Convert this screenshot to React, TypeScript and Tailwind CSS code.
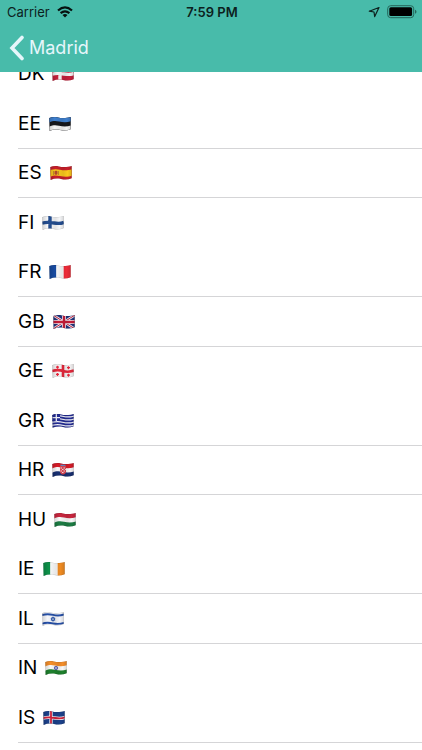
import type { ReactNode } from "react";

const WAVE = "M.3 2C3 .8 6 .8 9 1.400S17 2.400 21.700 .9V13.300C18 14.900 14.500 14.800 11 14S4 13.400 .6 14.900Z";

type Country = { code: string; name: string; divider: boolean; art: ReactNode };

function columns(colors: string[]) {
  const w = 22 / colors.length;
  return colors.map((c, i) => <rect key={i} x={i * w} width={w + 0.1} height="16" fill={c} />);
}

function nordic(field: string, outer: string, inner?: string) {
  return (
    <>
      <rect width="22" height="16" fill={field} />
      <path d="M8 0V16M0 8.200C4 7 8 7.300 12 8S19 8.600 22 7.400" fill="none" stroke={outer} strokeWidth="3.400" />
      {inner && <path d="M8 0V16M0 8.200C4 7 8 7.300 12 8S19 8.600 22 7.400" fill="none" stroke={inner} strokeWidth="1.800" />}
    </>
  );
}

function threeBands(top: string, middle: string, bottom: string) {
  return (
    <>
      <rect width="22" height="16" fill={middle} />
      <path d="M0 0H22V5.200C18 6.700 14 6.500 10 5.600S4 5 0 6.400Z" fill={top} />
      <path d="M0 16H22V9.400C18 11 14 10.700 10 9.800S4 9.200 0 10.700Z" fill={bottom} />
    </>
  );
}

const countries: Country[] = [
  { code: "DK", name: "Denmark", divider: false, art: nordic("#c4203b", "#f4f4f4") },
  { code: "EE", name: "Estonia", divider: true, art: threeBands("#3f7fcd", "#16171c", "#f4f4f4") },
  {
    code: "ES", name: "Spain", divider: true,
    art: (
      <>
        <rect width="22" height="16" fill="#c71f2b" />
        <path d="M0 5C4 3.800 7 4 10 4.700S18 5.700 22 4.200V10.800C18 12.300 14 12 10 11.100S4 10.400 0 11.800Z" fill="#fac81c" />
        <rect x="4.500" y="5.800" width="3" height="4" rx="1" fill="#b04a28" />
        <path d="M3.500 6V10M8.500 6V10" stroke="#a8742c" strokeWidth=".7" />
      </>
    ),
  },
  { code: "FI", name: "Finland", divider: false, art: nordic("#f5f6f8", "#234d90") },
  { code: "FR", name: "France", divider: true, art: columns(["#174a9f", "#fafafa", "#ed2b38"]) },
  {
    code: "GB", name: "United Kingdom", divider: true,
    art: (
      <>
        <rect width="22" height="16" fill="#20337d" />
        <path d="M0 1L22 15M0 15L22 1" stroke="#eceaf2" strokeWidth="2.600" />
        <path d="M0 1L22 15M0 15L22 1" stroke="#c5243f" strokeWidth="1" />
        <path d="M11 0V16M0 8H22" stroke="#f0edf4" strokeWidth="4" />
        <path d="M11 0V16M0 8H22" stroke="#c51c38" strokeWidth="2.400" />
      </>
    ),
  },
  {
    code: "GE", name: "Georgia", divider: false,
    art: (
      <>
        <rect width="22" height="16" fill="#f6f3f4" />
        <path d="M11 0V16M0 8C4 6.900 8 7 11 8S18 8.900 22 7.600" fill="none" stroke="#e5283c" strokeWidth="2.600" />
        <path d="M4 4.200H7M5.500 2.700V5.700M15 4.700H18M16.500 3.200V6.200M4 11.400H7M5.500 9.900V12.900M15 12.200H18M16.500 10.700V13.700" stroke="#e5283c" strokeWidth="1.300" />
      </>
    ),
  },
  {
    code: "GR", name: "Greece", divider: true,
    art: (
      <>
        <rect width="22" height="16" fill="#f0f1f8" />
        {[1.8, 4.8, 7.8, 10.8, 13.8].map((y) => (
          <path key={y} d={`M0 ${y}C4 ${y - 1} 8 ${y - 0.8} 11 ${y}S18 ${y + 1} 22 ${y - 0.3}`} fill="none" stroke="#232c94" strokeWidth="1.800" />
        ))}
        <rect width="8" height="8" fill="#232c94" />
        <path d="M4.300 0V8M0 4.600H8" stroke="#f0f1f8" strokeWidth="1.300" />
      </>
    ),
  },
  {
    code: "HR", name: "Croatia", divider: true,
    art: (
      <>
        {threeBands("#d51b28", "#f7f5f6", "#182f70")}
        <path d="M8 4H14V9.500Q14 12 11 12.500Q8 12 8 9.500Z" fill="#dc4652" />
        <path d="M8.500 6H10M11.500 6H13M10 7.500H11.500M13 7.500H14M8.500 9H10M11.500 9H13M10 10.500H11.500" stroke="#fbd9dc" />
        <path d="M8.500 3.300H13.500" stroke="#668bc5" strokeWidth="1.200" />
      </>
    ),
  },
  { code: "HU", name: "Hungary", divider: false, art: threeBands("#c9263e", "#f8f8f8", "#1c7c43") },
  { code: "IE", name: "Ireland", divider: true, art: columns(["#0d9049", "#fafafa", "#ef8b22"]) },
  {
    code: "IL", name: "Israel", divider: true,
    art: (
      <>
        <rect width="22" height="16" fill="#f5f6fa" />
        <path d="M0 4.200C4 2.800 7 3 11 3.900S18 4.900 22 3.400M0 12.700C4 11.300 7 11.600 11 12.400S18 13.300 22 11.800" fill="none" stroke="#2650a8" strokeWidth="1.900" />
        <path d="M11 5.800L13 9.200H9ZM11 10.400L9 7H13Z" fill="none" stroke="#2650a8" strokeWidth=".8" />
      </>
    ),
  },
  {
    code: "IN", name: "India", divider: false,
    art: (
      <>
        {threeBands("#f48e2a", "#f8f8f6", "#1e812d")}
        <circle cx="11" cy="8" r="1.700" fill="#a2a7d8" stroke="#373f9e" strokeWidth=".7" />
      </>
    ),
  },
  { code: "IS", name: "Iceland", divider: true, art: nordic("#1b418b", "#f0edf2", "#d1233d") },
];

function Flag({ country }: { country: Country }) {
  const clip = `flag-${country.code}`;
  return (
    <svg role="img" aria-label={country.name} viewBox="0 0 22 16" preserveAspectRatio="none" className="h-4 w-[22px] shrink-0">
      <defs>
        <clipPath id={clip}><path d={WAVE} /></clipPath>
        <linearGradient id={`${clip}-shade`}>
          <stop offset="0" stopColor="#000" stopOpacity=".16" />
          <stop offset=".25" stopColor="#000" stopOpacity="0" />
          <stop offset=".6" stopColor="#000" stopOpacity=".08" />
          <stop offset=".8" stopColor="#000" stopOpacity="0" />
          <stop offset="1" stopColor="#000" stopOpacity=".14" />
        </linearGradient>
      </defs>
      <g clipPath={`url(#${clip})`}>
        {country.art}
        <rect width="22" height="16" fill={`url(#${clip}-shade)`} />
        <path d={WAVE} fill="none" stroke="#000" strokeOpacity=".2" strokeWidth=".8" />
      </g>
    </svg>
  );
}

function StatusBar() {
  return (
    <div className="grid h-6 grid-cols-3 items-center pr-[5px] pl-[7px] text-[13px] leading-4 text-[#0c211d]">
      <div className="flex items-center gap-[7px]">
        <span>Carrier</span>
        <svg aria-hidden="true" viewBox="0 0 16 12" className="h-3 w-4" fill="none" stroke="#06110f" strokeWidth="2.200">
          <path d="M1 4.500Q8 -1.700 15 4.500M3.600 7.200Q8 3.400 12.400 7.200" />
          <path d="M5.500 9Q8 7 10.500 9L8 11.600Z" fill="#06110f" stroke="none" />
        </svg>
      </div>
      <span className="text-center font-semibold">7:59 PM</span>
      <div className="flex items-center justify-end gap-[7px]">
        <svg aria-hidden="true" viewBox="0 0 12 12" className="h-3 w-3" fill="none" stroke="#0c211d" strokeWidth="1.200" strokeLinejoin="round">
          <path d="M11 1.500L1.300 5.200L6 6L6.700 10.600Z" />
        </svg>
        <svg aria-hidden="true" viewBox="0 0 30 14" className="h-3.5 w-[30px]">
          <rect x=".7" y=".7" width="26" height="12" rx="3" fill="none" stroke="#25665a" />
          <rect x="2.300" y="2.300" width="22.800" height="8.800" rx="1.500" fill="#000" />
          <path d="M28 4.800Q29.500 5.200 29.500 6.800T28 8.800Z" fill="#25665a" />
        </svg>
      </div>
    </div>
  );
}

export default function App() {
  return (
    <div className="min-h-screen overflow-hidden bg-white font-['Inter','Liberation_Sans',sans-serif]">
      <header className="relative z-10 h-[72px] bg-[#48bbaa]">
        <StatusBar />
        <button type="button" className="flex h-12 items-center gap-1 pl-[9px] text-[18px] leading-6 text-[#e6f6fb]">
          <svg aria-hidden="true" viewBox="0 0 16 26" className="h-[26px] w-4" fill="none" stroke="currentColor" strokeWidth="3.600" strokeLinecap="round">
            <path d="M13 2.500L3 13L13 23.500" />
          </svg>
          <span>Madrid</span>
        </button>
      </header>
      <ul className="-mt-[22px]">
        {countries.map((country) => (
          <li
            key={country.code}
            className={`ml-[18px] flex items-center gap-2 border-b text-[19px] leading-6 text-black odd:h-[49px] even:h-[50px] ${country.divider ? "border-[#d5d5d7]" : "border-transparent"}`}
          >
            <span>{country.code}</span>
            <Flag country={country} />
          </li>
        ))}
      </ul>
    </div>
  );
}
